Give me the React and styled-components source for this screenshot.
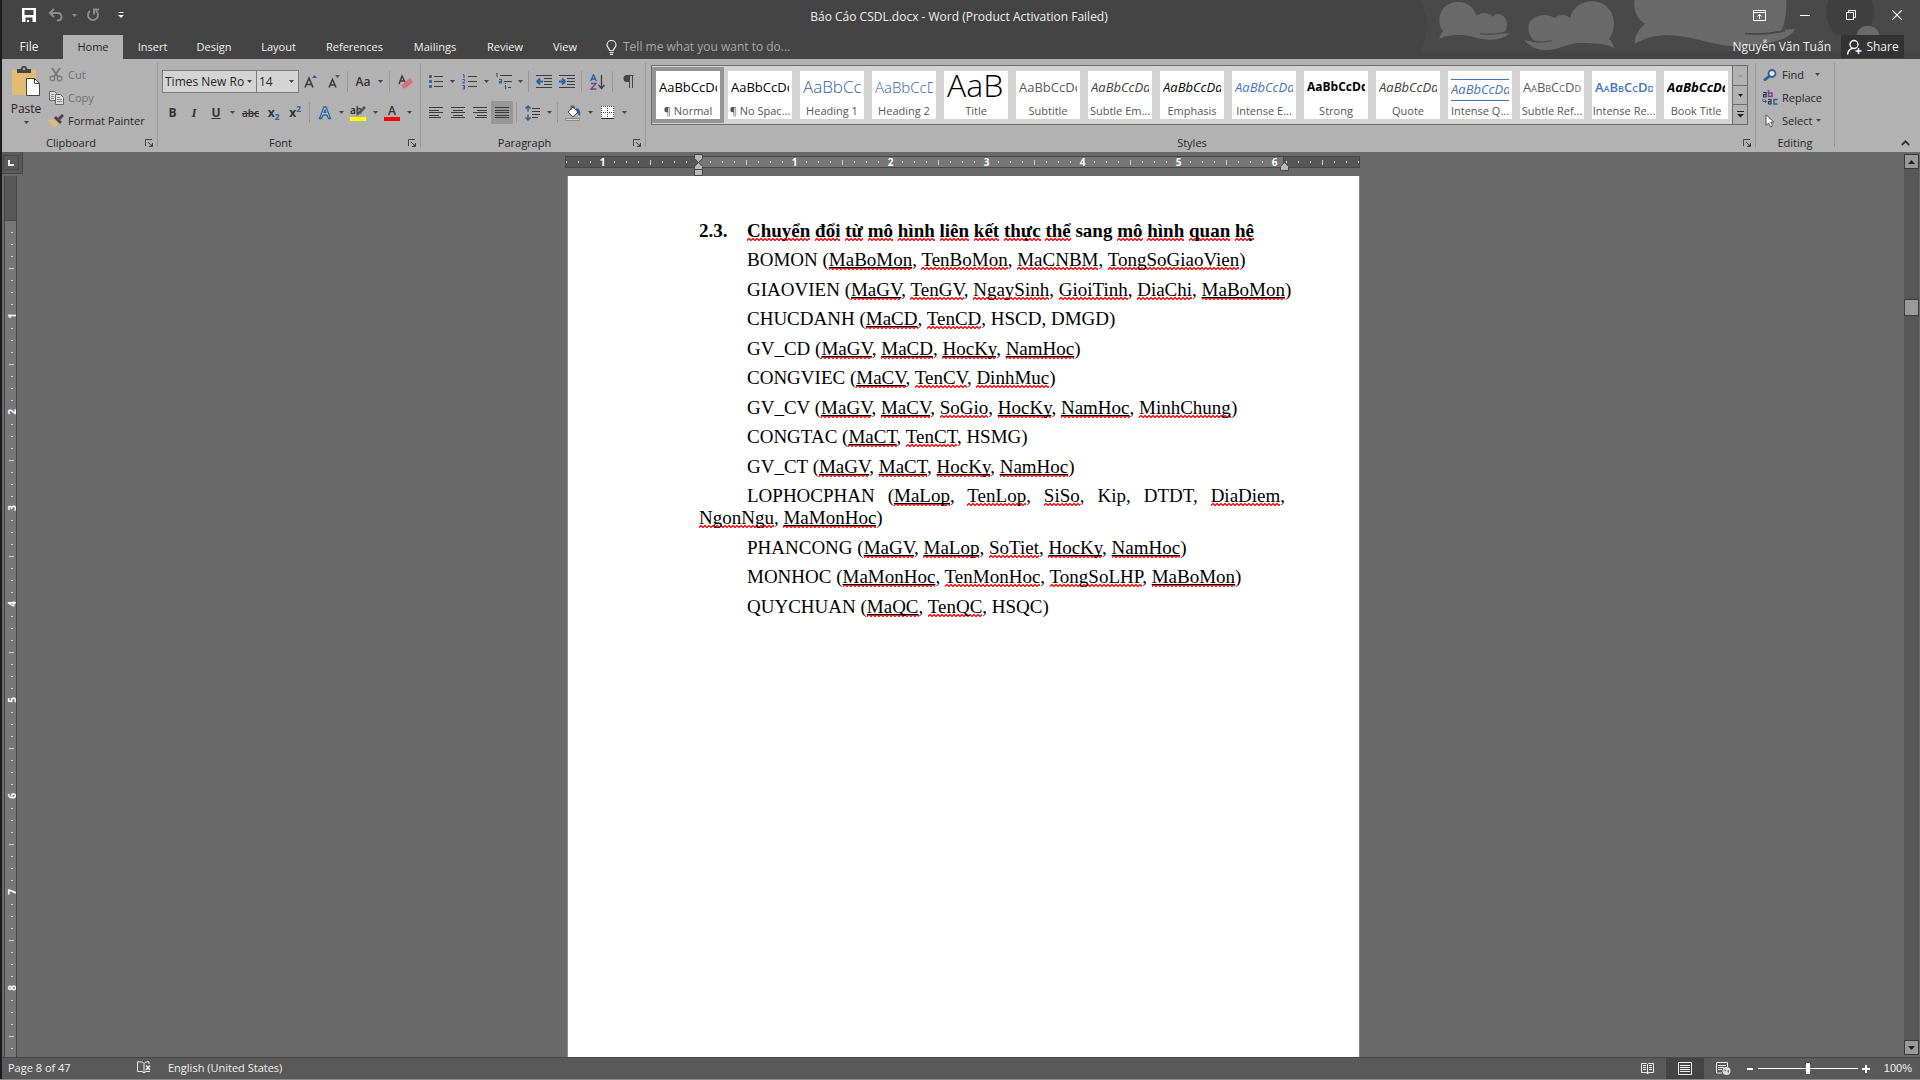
import React from "react";
import styled, { createGlobalStyle, css } from "styled-components";

const UI = `"Open Sans", "Noto Sans", sans-serif`;
const C = {
  chrome: "#444444",
  ribbon: "#b2b2b2",
  work: "#6a6a6a",
  status: "#595959",
  ink: "#262626",
  icon: "#444444",
  blue: "#2a6099",
  line: "#979797",
};

const Global = createGlobalStyle`
  * { box-sizing: border-box; }
  html, body { margin: 0; height: 100%; background: #1c1c1c; }
  #root { height: 100%; }
  button, input, select { font: inherit; color: inherit; margin: 0; padding: 0; border: 0; background: none; }
  button { cursor: pointer; }
  svg { display: block; flex: none; }
`;

const Shell = styled.div`
  display: flex;
  flex-direction: column;
  height: 100vh;
  padding-left: 2px;
  font: 12px/16px ${UI};
  color: ${C.ink};
  border-bottom: 1px solid #8a8a8a;
  overflow: hidden;
`;

/* ---------- header ---------- */
const Header = styled.header`
  position: relative;
  background: ${C.chrome};
  color: #f0f0f0;
`;
const Clouds = styled.svg`
  position: absolute;
  top: 0;
  right: 0;
`;
const TitleRow = styled.div`
  position: relative;
  display: grid;
  grid-template-columns: 1fr auto 1fr;
  align-items: center;
  height: 35px;
  padding-bottom: 5px;
`;
const Title = styled.h1`
  margin: 0;
  padding: 4px 4px 0 0;
  font-size: 12px;
  font-weight: 400;
`;
const QuickBar = styled.div`
  display: flex;
  align-items: center;
  padding-left: 12px;
`;
const WindowBar = styled.div`
  display: flex;
  justify-content: flex-end;
`;
const IconButton = styled.button`
  display: flex;
  align-items: center;
  justify-content: center;
  width: ${(p) => p.$w}px;
  height: 23px;
  background: ${(p) => (p.$on ? "#979797" : "none")};
`;
const TabRow = styled.nav`
  position: relative;
  display: flex;
  height: 24px;
`;
const Tab = styled.button`
  width: ${(p) => p.$w}px;
  margin-right: ${(p) => p.$gap || 0}px;
  font-size: ${(p) => (p.$file ? 12 : 11)}px;
  ${(p) =>
    p.$active &&
    css`
      background: ${C.ribbon};
      color: ${C.ink};
    `}
`;
const TellMe = styled.label`
  display: flex;
  align-items: center;
  gap: 6px;
  margin-left: 14px;
  flex: 1;
`;
const TellInput = styled.input`
  width: 200px;
  outline: 0;
  font-size: 12px;
  &::placeholder { color: #a8a8a8; opacity: 1; }
`;
const User = styled.button`
  padding: 0 10px;
  font-size: 12px;
`;
const Share = styled.button`
  display: flex;
  align-items: center;
  justify-content: center;
  gap: 4px;
  width: 63px;
  height: 23px;
  margin-right: 16px;
  background: #333333;
`;

/* ---------- ribbon ---------- */
const Ribbon = styled.div`
  display: flex;
  height: 93px;
  background: ${C.ribbon};
`;
const Group = styled.section`
  display: flex;
  flex-direction: column;
  flex: none;
  width: ${(p) => p.$w}px;
`;
const GroupBody = styled.div`
  flex: 1;
  display: flex;
  flex-direction: ${(p) => (p.$rows ? "column" : "row")};
  gap: ${(p) => (p.$rows ? 8 : 0)}px;
  padding: ${(p) => p.$pad};
`;
const Footer = styled.div`
  display: flex;
  height: 18px;
`;
const GroupName = styled.h2`
  flex: 1;
  margin: 0;
  font-size: 11px;
  font-weight: 400;
  line-height: 18px;
  text-align: center;
`;
const Launch = styled.button`
  display: flex;
  align-items: center;
  justify-content: center;
  width: 17px;
`;
const Divider = styled.div`
  width: 1px;
  margin: 4px 0 5px;
  background: ${C.line};
`;
const Tools = styled.div`
  display: flex;
  align-items: center;
  height: 23px;
`;
const Sep = styled.div`
  width: 1px;
  height: 21px;
  margin: 0 3px;
  background: ${C.line};
`;
const Select = styled.select`
  appearance: none;
  width: ${(p) => p.$w}px;
  height: 23px;
  margin-right: ${(p) => p.$join || 0}px;
  padding: 0 12px 0 2px;
  border: 1px solid #7c7c7c;
  border-radius: 0;
  background: #d4d4d4
    url("data:image/svg+xml,%3Csvg xmlns='http://www.w3.org/2000/svg' width='5' height='3'%3E%3Cpath d='M0 0h5L2.500 3z' fill='%23444'/%3E%3C/svg%3E")
    no-repeat right 4px center;
  font-size: 12px;
`;
const Glyph = styled.span`
  font-size: ${(p) => p.$s || 14}px;
  font-weight: ${(p) => p.$wt || 600};
  font-style: ${(p) => (p.$i ? "italic" : "normal")};
  font-family: ${(p) => (p.$serif ? `"Liberation Serif", serif` : UI)};
  text-decoration: ${(p) => p.$deco || "none"};
  line-height: 16px;
  color: #333333;
  sup, sub { font-size: 8px; color: ${C.blue}; line-height: 0; }
`;
const PasteButton = styled.button`
  display: flex;
  flex-direction: column;
  align-items: center;
  width: 40px;
  height: 63px;
  margin: 3px 2px 0 4px;
  gap: 4px;
`;
const Stack = styled.div`
  display: flex;
  flex-direction: column;
`;
const Command = styled.button`
  display: flex;
  align-items: center;
  gap: 4px;
  height: 23px;
  font-size: 11px;
  color: ${(p) => (p.disabled ? "#707070" : C.ink)};
`;
const IconSlot = styled.span`
  display: flex;
  justify-content: center;
  width: 16px;
`;
const CommandDrop = styled.span`
  padding-left: ${(p) => p.$pad || 0}px;
`;

/* ---------- gallery ---------- */
const Gallery = styled.div`
  display: flex;
  height: 60px;
  border: 1px solid #6c6c6c;
  background: #d4d4d4;
`;
const Tiles = styled.div`
  display: flex;
  flex: 1;
  overflow: hidden;
  padding: 1px 0;
`;
const Tile = styled.button`
  flex: none;
  width: 72px;
  height: 56px;
  border: 4px solid ${(p) => (p.$on ? "#949494" : "#d4d4d4")};
  background: #ffffff;
  text-align: center;
  overflow: hidden;
`;
const Sample = styled.span`
  display: block;
  height: 28px;
  margin: 4px 3px 0;
  overflow: hidden;
  white-space: nowrap;
  text-align: left;
  font-size: ${(p) => p.$s || 13}px;
  line-height: ${(p) => p.$lh || 24}px;
  font-weight: ${(p) => p.$wt || 400};
  font-style: ${(p) => (p.$i ? "italic" : "normal")};
  font-variant: ${(p) => (p.$sc ? "small-caps" : "normal")};
  color: ${(p) => p.$c || "#000"};
  ${(p) =>
    p.$ruled &&
    css`
      height: 22px;
      margin: 8px 3px 2px;
      line-height: 18px;
      border-top: 1px solid #4472c4;
      border-bottom: 1px solid #4472c4;
    `}
`;
const TileName = styled.span`
  display: block;
  font-size: 11px;
  line-height: 16px;
  white-space: nowrap;
  color: #555555;
`;
const GalleryNav = styled.div`
  display: flex;
  flex-direction: column;
  width: 15px;
  border-left: 1px solid #6c6c6c;
`;
const NavButton = styled.button`
  flex: 1;
  display: flex;
  align-items: center;
  justify-content: center;
  background: ${C.ribbon};
  & + & { border-top: 1px solid #6c6c6c; }
`;
const Collapse = styled.button`
  display: flex;
  align-items: center;
  justify-content: center;
  align-self: flex-end;
  width: 20px;
  height: 18px;
  margin: 0 5px 0 auto;
`;

/* ---------- workspace ---------- */
const Work = styled.div`
  flex: 1;
  min-height: 0;
  display: grid;
  grid-template-columns: 21px 1fr 18px;
  background: ${C.work};
`;
const LeftRail = styled.div`
  display: flex;
  flex-direction: column;
  min-height: 0;
  overflow: hidden;
`;
const Corner = styled.button`
  display: flex;
  flex: none;
  width: 21px;
  height: 22px;
  padding: 3px 3px 4px 1px;
  background: ${C.status};
  border-right: 1px solid #474747;
  border-bottom: 1px solid #474747;
`;
const CornerFace = styled.span`
  flex: 1;
  display: flex;
  align-items: center;
  justify-content: center;
  height: 15px;
  border: 1px solid #474747;
`;
const VRuler = styled.div`
  flex: 1;
  min-height: 0;
  width: 13px;
  margin: 2px 0 0 2px;
  border: solid #474747;
  border-width: 0 1px;
  background: #777777;
  overflow: hidden;
`;
const VMargin = styled.div`
  height: 45px;
  margin-bottom: 5px;
  background: #575757;
  border-bottom: 1px solid #474747;
`;
const VCell = styled.div`
  display: flex;
  align-items: center;
  justify-content: center;
  height: 12px;
  padding-left: 2px;
`;
const VMark = styled.i`
  width: ${(p) => (p.$half ? 5 : 2)}px;
  height: 1px;
  background: #cfcfcf;
`;
const RulerNum = styled.b`
  font-size: 10px;
  line-height: 10px;
  color: #ffffff;
  transform: ${(p) => (p.$turn ? "rotate(-90deg)" : "none")};
`;
const Canvas = styled.div`
  display: flex;
  flex-direction: column;
  align-items: center;
  min-height: 0;
  overflow: hidden;
`;
const Sheet = styled.div`
  display: flex;
  flex-direction: column;
  flex: 1;
  width: 795px;
`;
const HRuler = styled.div`
  position: relative;
  flex: none;
  display: flex;
  justify-content: center;
  height: 12px;
  margin: 4px 0 8px;
  border: 1px solid #474747;
  background: linear-gradient(to right, #575757 133px, #777777 133px, #777777 717px, #474747 717px, #474747 718px, #575757 718px);
`;
const HTrack = styled.div`
  display: flex;
  justify-content: center;
  width: 100%;
  overflow: hidden;
`;
const HCell = styled.div`
  flex: none;
  display: flex;
  align-items: center;
  justify-content: center;
  width: 12px;
`;
const HMark = styled.i`
  width: 1px;
  height: ${(p) => (p.$half ? 5 : 2)}px;
  background: #cfcfcf;
`;
const Marker = styled.svg`
  position: absolute;
  left: ${(p) => p.$x}px;
  top: ${(p) => p.$y}px;
`;
const Page = styled.article`
  flex: 1;
  margin-left: 2px;
  padding: 44px 74px 0 131px;
  border: solid #8a8a8a;
  border-width: 0 1px;
  background: #ffffff;
  color: #000000;
  font: 19px/22px "Liberation Serif", "Times New Roman", serif;
`;
const Heading = styled.h3`
  display: flex;
  margin: 0 0 7px;
  font-size: inherit;
  font-weight: 700;
  white-space: nowrap;
`;
const HeadNo = styled.span`
  width: 48px;
`;
const Para = styled.p`
  margin: 0 0 8px;
  text-indent: 48px;
  text-align: justify;
  white-space: ${(p) => (p.$wrap ? "normal" : "nowrap")};
  &:nth-child(odd) { margin-bottom: 7px; }
`;
const Spell = styled.span`
  background: url("data:image/svg+xml,%3Csvg xmlns='http://www.w3.org/2000/svg' width='4' height='3'%3E%3Cpath d='M-1 3.500L2 .5L5 3.500' fill='none' stroke='red' stroke-width='1.300'/%3E%3C/svg%3E")
    repeat-x left bottom;
  ${(p) =>
    p.$key &&
    css`
      text-decoration: underline;
      text-decoration-thickness: 1px;
      text-underline-offset: 1px;
      text-decoration-skip-ink: none;
    `}
`;
const ScrollBar = styled.div`
  display: flex;
  flex-direction: column;
  width: 15px;
  margin: 2px 1px 2px 2px;
  background: #575757;
`;
const ScrollButton = styled.button`
  display: flex;
  align-items: center;
  justify-content: center;
  height: 15px;
  background: #999999;
  border: 1px solid #383838;
`;
const ScrollTrack = styled.div`
  flex: 1;
  padding-top: 130px;
`;
const ScrollThumb = styled.div`
  height: 17px;
  background: #999999;
  border: 1px solid #3c3c3c;
`;

/* ---------- status bar ---------- */
const Status = styled.footer`
  display: flex;
  align-items: center;
  height: 22px;
  padding: 0 8px 0 6px;
  background: ${C.status};
  border-top: 1px solid #474747;
  color: #f0f0f0;
  font-size: 11px;
`;
const StatusButton = styled.button`
  width: ${(p) => (p.$w ? p.$w + "px" : "auto")};
  padding-bottom: 2px;
  text-align: left;
`;
const ViewButton = styled.button`
  display: flex;
  align-items: center;
  justify-content: center;
  width: 38px;
  height: 21px;
  background: ${(p) => (p.$on ? "#444444" : "none")};
`;
const Spacer = styled.div`
  flex: 1;
`;
const Zoom = styled.input`
  appearance: none;
  width: 100px;
  height: 11px;
  background: linear-gradient(#fff, #fff) center / 100% 1px no-repeat;
  &::-webkit-slider-thumb {
    appearance: none;
    width: 4px;
    height: 11px;
    background: #ffffff;
  }
`;
const ZoomStep = styled.button`
  display: flex;
  justify-content: center;
  width: 16px;
`;
const ZoomValue = styled.button`
  width: 38px;
  padding-bottom: 2px;
  font: 11px/16px "Liberation Sans", Arial, sans-serif;
  text-align: right;
`;

/* ---------- icons ---------- */
const Caret = ({ c = "#444", up }) => (
  <svg width="5" height="3" viewBox="0 0 5 3"><path d={up ? "M0 3h5L2.500 0z" : "M0 0h5L2.500 3z"} fill={c} /></svg>
);
const Svg = ({ w = 16, h = 16, children }) => (
  <svg width={w} height={h} viewBox={`0 0 ${w} ${h}`} fill="none">{children}</svg>
);
const alignRows = {
  left: [[1, 15], [1, 11], [1, 15], [1, 11], [1, 13]],
  center: [[1, 15], [3, 13], [1, 15], [3, 13], [1, 15]],
  right: [[1, 15], [5, 15], [1, 15], [5, 15], [3, 15]],
  full: [[1, 15], [1, 15], [1, 15], [1, 15], [1, 15]],
};
const Align = ({ kind }) => (
  <Svg w={16} h={13}>
    {alignRows[kind].map(([a, b], i) => <path key={i} d={`M${a} ${1.5 + i * 2.5}H${b}`} stroke="#3c3c3c" shapeRendering="crispEdges" />)}
  </Svg>
);
const LaunchIcon = () => (
  <Svg w={8} h={8}><path d="M.5 7V.5H7M3 3l4 4M7.500 4v3.500H4" stroke="#444" /><path d="M7.500 4.500v3h-3z" fill="#444" /></Svg>
);
const SaveIcon = () => (
  <Svg w={14} h={14}><path d="M0 0h14v14H0zM2.500 2v5h9V2zM3.500 9.500V14h1.500v-2h2v2h3.500V9.500z" fill="#fff" fillRule="evenodd" /></Svg>
);
const UndoIcon = () => (
  <Svg w={16} h={14}><path d="M6 1L2 5l4 4M2.500 5H9c3 0 4.500 1.500 4.500 4S12 12.500 9 12.500" stroke="#8c8c8c" strokeWidth="2" /></Svg>
);
const RedoIcon = () => (
  <Svg w={14} h={14}><path d="M4 3a5 5 0 1 0 6 0M8 6.500V1.500h5" stroke="#8c8c8c" strokeWidth="2" /></Svg>
);
const CustomIcon = () => (
  <Svg w={6} h={7}><path d="M.5.5h5" stroke="#eee" /><path d="M0 3h6L3 6z" fill="#eee" /></Svg>
);
const BulbIcon = () => (
  <Svg w={11} h={15}><path d="M3.500 10.500C3.500 8 1 7.500 1 5a4.500 4.500 0 0 1 9 0c0 2.500-2.500 3-2.500 5.500zM3.500 12.500h4M4 14.300h3" stroke="#e8e8e8" strokeWidth="1.200" /></Svg>
);
const PersonIcon = () => (
  <Svg w={16} h={16}><circle cx="8" cy="5.500" r="4" stroke="#fff" strokeWidth="1.400" /><path d="M1.500 15.500C2 12 4 10 6.500 9.500M9.500 12h6M12.500 9v6" stroke="#fff" strokeWidth="1.400" /></Svg>
);
const PasteIcon = () => (
  <Svg w={28} h={31}>
    <path d="M0 4h24v25H0z" fill="#e3bd6f" />
    <path d="M5 7V3h4a3 3 0 0 1 6 0h4v4z" fill="#444" /><circle cx="12" cy="3" r="1.200" fill="#b2b2b2" />
    <path d="M14.500 12.500h8l5 5v12h-13z" fill="#fff" stroke="#444" /><path d="M22.500 12.500v5h5" stroke="#444" />
  </Svg>
);
const CutIcon = () => (
  <Svg w={14} h={15}><path d="M3 1l6 9M11 1L5 10" stroke="#777" strokeWidth="1.800" /><circle cx="3.300" cy="11.500" r="2.300" stroke="#777" strokeWidth="1.200" /><circle cx="10.700" cy="11.500" r="2.300" stroke="#777" strokeWidth="1.200" /></Svg>
);
const CopyIcon = () => (
  <Svg w={15} h={14}>
    <path d="M.5.5h5l2 2v7h-7z" fill="#ddd" stroke="#666" /><path d="M2 3.500h3M2 5.500h3M2 7.500h3" stroke="#888" />
    <path d="M6.500 3.500h5l3 3v7h-8z" fill="#ddd" stroke="#666" /><path d="M8 6.500h3M8 8.500h5M8 10.500h5" stroke="#888" />
  </Svg>
);
const BrushIcon = () => (
  <Svg w={16} h={14}><path d="M0 6l5-1 5 5-3 4z" fill="#e3bd6f" /><path d="M6 4l2-2 6 6-2 2z" fill="#444" /><path d="M11 5l4-4" stroke="#444" strokeWidth="3" /></Svg>
);
const GrowIcon = ({ down }) => (
  <Svg w={14} h={16}>
    <path d={down ? "M2 13.500L5.500 5.500 9 13.500M3.500 11h4" : "M1 13.500L5 4l4 9.500M2.500 10.500h5"} stroke="#3c3c3c" strokeWidth="1.600" />
    <path d={down ? "M8 1h5l-2.500 3z" : "M8 4h5L10.500 1z"} fill={C.blue} />
  </Svg>
);
const EraserIcon = () => (
  <Svg w={16} h={16}><path d="M1 10L4 2l3 6M2.500 7h4" stroke="#3c3c3c" strokeWidth="1.500" /><path d="M5 10l7-6 3 4-7 6z" fill="#da6a80" /><path d="M4 11l3 3" stroke="#da6a80" strokeWidth="2" /></Svg>
);
const EffectsIcon = () => (
  <Svg w={16} h={16}><path d="M2.500 13.500L7 2h2l4.500 11.500h-2L10 10H6l-1.500 3.500zM7 7.500h2L8 5z" fill="#d0dcec" stroke={C.blue} strokeWidth="1.300" /></Svg>
);
const Swatch = styled.span`
  display: flex;
  align-items: center;
  justify-content: center;
  width: 16px;
  height: 17px;
  border-bottom: 4px solid ${(p) => p.$c};
`;
const HiliteIcon = () => (
  <Svg w={16} h={13}><path d="M6 12l2-4 6-6 2 2-6 6z" fill="#555" /></Svg>
);
const HiliteGlyph = styled.span`
  display: flex;
  width: 16px;
  font-size: 10px;
  font-weight: 600;
  line-height: 12px;
  svg { margin-left: -12px; }
`;
const BulletIcon = () => (
  <Svg w={14} h={15}>{[1, 6, 11].map((y) => <React.Fragment key={y}><rect x="0" y={y} width="3" height="3" rx="1" fill={C.blue} /><path d={`M5 ${y + 1.5}h9`} stroke="#3c3c3c" /></React.Fragment>)}</Svg>
);
const NumberIcon = () => (
  <Svg w={15} h={17}>
    <path d="M1 1.500h1V5M.5 6.500h2v1.500l-2 2h2.500M.5 12.500h2v3.500h-2M1 14.200h1.500" stroke={C.blue} />
    <path d="M6 3.500h9M6 8.500h9M6 13.500h9" stroke="#3c3c3c" />
  </Svg>
);
const MultiIcon = () => (
  <Svg w={17} h={17}>
    <path d="M1 .5h1V4M4 6.500h2.500V10H4.500V8.500h2M10.500 10v1M10.500 12v4" stroke={C.blue} strokeWidth="1.200" />
    <path d="M5 2.500h12M9 8.500h8M13 14.500h3" stroke="#3c3c3c" />
  </Svg>
);
const IndentIcon = ({ out }) => (
  <Svg w={16} h={13}>
    <path d="M0 .5h16M8 3.500h8M8 6.500h8M8 9.500h8M0 12.500h16" stroke="#3c3c3c" />
    <path d={out ? "M7 6.500H1M4 3.500L1 6.500l3 3" : "M0 6.500h6M3 3.500l3 3-3 3"} stroke={C.blue} strokeWidth="1.800" />
  </Svg>
);
const SortIcon = () => (
  <Svg w={15} h={16}>
    <path d="M.7 7L3.500.8 6.300 7M1.700 5h3.600" stroke={C.blue} strokeWidth="1.400" />
    <path d="M1 9.500h5l-5 5.500h5.300" stroke="#7a3f98" strokeWidth="1.400" />
    <path d="M11.500 1v13M8.500 11l3 3.500 3-3.500" stroke="#3c3c3c" strokeWidth="1.300" />
  </Svg>
);
const PilcrowIcon = () => (
  <Svg w={11} h={13}><path d="M10.500.5H4.500M6.500 1v12M9.500 1v12" stroke="#444" /><path d="M7 0H4a3.500 3.500 0 0 0 0 7h3z" fill="#444" /></Svg>
);
const SpacingIcon = () => (
  <Svg w={15} h={16}><path d="M3 1v5.500M.5 3.500L3 1l2.500 2.500M3 15V9.500M.5 12.500L3 15l2.500-2.500" stroke={C.blue} strokeWidth="1.500" /><path d="M7 3.500h8M7 6.500h8M7 9.500h8M7 12.500h6" stroke="#3c3c3c" /></Svg>
);
const BucketIcon = () => (
  <Svg w={16} h={16}><path d="M3 7l5-5 5 5-5 5z" fill="#fff" stroke="#444" /><path d="M6 5V1h3v3" stroke="#444" /><path d="M11 3c3 0 5 3 4 8l-3-3z" fill={C.blue} /><path d="M.5 13.500h14v2H.5z" fill="#d4d4d4" stroke="#888" /></Svg>
);
const BorderIcon = () => (
  <Svg w={13} h={13}><path d="M0 0h13v12H0z" fill="#fff" /><path d="M0 .5h13M.5 0v12M12.500 0v12M6.500 0v12M0 6.500h13" stroke="#444" strokeDasharray="1 1" /><path d="M0 12.500h13" stroke="#333" /></Svg>
);
const FindIcon = () => (
  <Svg w={14} h={12}><circle cx="9" cy="4.500" r="3.500" fill="#e8e8e8" stroke={C.blue} strokeWidth="1.800" /><path d="M6.500 7L1 11.500" stroke={C.blue} strokeWidth="2.800" /></Svg>
);
const ReplaceIcon = () => (
  <Svg w={16} h={16}>
    <path d="M1 2.500h3V7H1.500V4.500H4" stroke="#333" strokeWidth="1.200" />
    <path d="M6.500 0v6.500h3.500V3H6.500" stroke="#7a3f98" strokeWidth="1.500" />
    <path d="M1 9v2.500h3M3 9.500l1.500 2L3 13" stroke={C.blue} />
    <path d="M6 9.500h3V14H6.500v-2.500H9" stroke="#333" strokeWidth="1.200" />
    <path d="M15.500 9.500H12V14h3.500" stroke={C.blue} strokeWidth="1.500" />
  </Svg>
);
const PointerIcon = () => (
  <Svg w={10} h={14}><path d="M1 .8v10.500l2.600-2.300L5.500 13l2-1-1.800-3.800H9z" fill="#fff" stroke="#444" strokeWidth=".9" /></Svg>
);
const ProofIcon = () => (
  <Svg w={14} h={13}><path d="M7 11.500V2.500C6 1 4.500.8.5.8v9.700h4.500L7 12l2-1.500h4M7 2.500C8 1 9.500.8 12 .8V3" stroke="#eee" /><path d="M9 4.500l4 4.500M13 4.500L9 9" stroke="#eee" strokeWidth="1.500" /></Svg>
);
const ReadIcon = () => (
  <Svg w={13} h={13}><path d="M.5 1.500h5l1 1 1-1h5v9h-5l-1 1.500-1-1.500h-5zM6.500 2.500V12" stroke="#eee" /><path d="M2 3.500h3M2 5.500h3M2 7.500h3M8 3.500h3M8 5.500h3M8 7.500h3" stroke="#eee" /></Svg>
);
const PrintIcon = () => (
  <Svg w={14} h={13}><path d="M.5.5h13v12H.5zM2 3.500h10M2 5.500h10M2 7.500h10M2 9.500h10" stroke="#eee" /></Svg>
);
const WebIcon = () => (
  <Svg w={15} h={13}><path d="M6 11H.5V.5h11V5M2 3.500h8M2 5.500h6M2 7.500h4" stroke="#eee" /><circle cx="10.500" cy="9" r="4" fill="#ddd" /><path d="M8 7l2 1-1 2zM11 9l2-1v3z" fill="#666" /></Svg>
);

/* ---------- data ---------- */
const tabs = [
  ["Home", 60], ["Insert", 59], ["Design", 64], ["Layout", 65],
  ["References", 87], ["Mailings", 74], ["Review", 66], ["View", 54],
];
const styleTiles = [
  { name: "¶ Normal" },
  { name: "¶ No Spac..." },
  { name: "Heading 1", s: 17, c: "#2f5fa8", wt: 300 },
  { name: "Heading 2", s: 15, c: "#2f5fa8", wt: 300 },
  { name: "Title", s: 32, wt: 300, lh: 20 },
  { name: "Subtitle", c: "#5a5a5a" },
  { name: "Subtle Em...", c: "#404040", i: true },
  { name: "Emphasis", i: true },
  { name: "Intense E...", c: "#4472c4", i: true },
  { name: "Strong", s: 12, wt: 700 },
  { name: "Quote", c: "#404040", i: true },
  { name: "Intense Q...", c: "#4472c4", i: true, ruled: true },
  { name: "Subtle Ref...", c: "#5a5a5a", sc: true },
  { name: "Intense Re...", c: "#4472c4", sc: true, wt: 600 },
  { name: "Book Title", wt: 700, i: true },
];
/* "_" marks a key attribute, "~" a word that passes the spelling check */
const relations = [
  ["BOMON", "_MaBoMon TenBoMon MaCNBM TongSoGiaoVien"],
  ["GIAOVIEN", "_MaGV TenGV NgaySinh GioiTinh DiaChi _MaBoMon"],
  ["CHUCDANH", "_MaCD TenCD ~HSCD ~DMGD"],
  ["GV_CD", "_MaGV _MaCD _HocKy _NamHoc"],
  ["CONGVIEC", "_MaCV TenCV DinhMuc"],
  ["GV_CV", "_MaGV _MaCV SoGio _HocKy _NamHoc MinhChung"],
  ["CONGTAC", "_MaCT TenCT ~HSMG"],
  ["GV_CT", "_MaGV _MaCT _HocKy _NamHoc"],
  ["LOPHOCPHAN", "_MaLop TenLop SiSo ~Kip ~DTDT DiaDiem NgonNgu _MaMonHoc"],
  ["PHANCONG", "_MaGV _MaLop SoTiet _HocKy _NamHoc"],
  ["MONHOC", "_MaMonHoc TenMonHoc TongSoLHP _MaBoMon"],
  ["QUYCHUAN", "_MaQC TenQC ~HSQC"],
];
const headingWords = "Chuyển đổi từ mô hình liên kết thực thể ~sang mô hình quan hệ".split(" ");

const Attr = ({ word }) => {
  if (word[0] === "~") return word.slice(1);
  if (word[0] === "_") return <Spell $key>{word.slice(1)}</Spell>;
  return <Spell>{word}</Spell>;
};

const GroupFoot = ({ name, launch = true }) => (
  <Footer>
    <GroupName>{name}</GroupName>
    {launch && <Launch aria-label={name + " settings"}><LaunchIcon /></Launch>}
  </Footer>
);
const Btn = ({ w, label, on, children }) => (
  <IconButton $w={w} $on={on} aria-label={label}>{children}</IconButton>
);
const Drop = ({ w = 10, label }) => <Btn w={w} label={label + " options"}><Caret /></Btn>;

const hTicks = Array.from({ length: 67 }, (_, i) => i - 11);
const vTicks = Array.from({ length: 72 }, (_, i) => i + 1);

export default function App() {
  return (
    <Shell>
      <Global />
      <Header>
        <Clouds width="520" height="59" viewBox="0 0 1560 177">
          <path d="M60 0H1560V155H60Q100 80 60 0z" fill="#494949" />
          <path d="M1285 0h130q20 50-20 105h-90q-40-50-20-105z" fill="#404040" />
          <g fill="#6a6a6a">
            <path d="M118 62C118 28 142 6 174 6c28 0 48 17 56 41 13-12 36-11 48 3 20-20 45 2 43 26-1 11-6 20-14 24 10 2 17 0 24-4-9 15-34 23-58 23-44 0-62-17-95-14-24 1-39 1-60 12 2-10 4-16 12-23-8-9-12-19-12-32z" />
            <path d="M642 70c0-37-28-66-66-66-33 0-58 20-66 50-13-12-34-12-45 1-26-21-78-9-80 26-1 18 8 33 20 42-13 2-25 0-33-6 13 20 36 34 68 33 46-2 66-23 104-21 38 1 72 1 98 15-2-12-7-20-15-27 10-13 15-29 15-47z" />
            <path d="M704 0c-6 31 10 60 32 71-20 16-33 36-32 61 55-35 117-29 178-16 55 13 108 28 168 21 75-9 119-20 136-50-13 1-29 0-41 4 12-25 14-59 14-91z" />
            <path d="M1370 108c2-20 16-31 33-31 18 0 31 11 36 28h20l20 12h-110z" />
          </g>
          <path d="M1035 101q70 5 120-10" stroke="#464646" strokeWidth="5" fill="none" />
          <path d="M240 101q40 5 72-4M455 122q-30 8-60 1" stroke="#4c4c4c" strokeWidth="4" fill="none" />
        </Clouds>
        <TitleRow>
          <QuickBar>
            <Btn w={30} label="Save"><SaveIcon /></Btn>
            <Btn w={24} label="Undo"><UndoIcon /></Btn>
            <Btn w={12} label="Undo list"><Caret c="#8c8c8c" /></Btn>
            <Btn w={25} label="Redo"><RedoIcon /></Btn>
            <Btn w={32} label="Customize toolbar"><CustomIcon /></Btn>
          </QuickBar>
          <Title>Báo Cáo CSDL.docx - Word (Product Activation Failed)</Title>
          <WindowBar>
            <Btn w={46} label="Ribbon display"><Svg w={13} h={11}><path d="M.5.5h12v10H.5zM.5 2.500h12M6.500 9V4.500M4.500 6.500l2-2 2 2" stroke="#fff" /></Svg></Btn>
            <Btn w={46} label="Minimize"><Svg w={10} h={11}><path d="M0 5.500h10" stroke="#fff" /></Svg></Btn>
            <Btn w={46} label="Restore"><Svg w={10} h={10}><path d="M.5 2.500h7v7h-7zM2.500 2V.5h7v7H8" stroke="#fff" /></Svg></Btn>
            <Btn w={46} label="Close"><Svg w={10} h={10}><path d="M0 0l10 10M10 0L0 10" stroke="#fff" strokeWidth="1.200" /></Svg></Btn>
          </WindowBar>
        </TitleRow>
        <TabRow>
          <Tab $w={54} $gap={7} $file>File</Tab>
          {tabs.map(([t, w], i) => <Tab key={t} $w={w} $active={i === 0}>{t}</Tab>)}
          <TellMe>
            <BulbIcon />
            <TellInput aria-label="Tell me" placeholder="Tell me what you want to do..." />
          </TellMe>
          <User>Nguyễn Văn Tuấn</User>
          <Share><PersonIcon />Share</Share>
        </TabRow>
      </Header>

      <Ribbon>
        <Group $w={155}>
          <GroupBody $pad="4px 0 0">
            <PasteButton>
              <PasteIcon />
              <span>Paste</span>
              <Caret />
            </PasteButton>
            <Stack>
              <Command disabled><IconSlot><CutIcon /></IconSlot>Cut</Command>
              <Command disabled><IconSlot><CopyIcon /></IconSlot>Copy</Command>
              <Command><IconSlot><BrushIcon /></IconSlot>Format Painter</Command>
            </Stack>
          </GroupBody>
          <GroupFoot name="Clipboard" />
        </Group>
        <Divider />
        <Group $w={262}>
          <GroupBody $rows $pad="11px 0 0 4px">
            <Tools>
              <Select $w={95} $join={-1} aria-label="Font"><option>Times New Roman</option></Select>
              <Select $w={43} aria-label="Font size"><option>14</option></Select>
              <Btn w={24} label="Grow font"><GrowIcon /></Btn>
              <Btn w={21} label="Shrink font"><GrowIcon down /></Btn>
              <Sep />
              <Btn w={24} label="Change case"><Glyph $s={12} $wt={600}>Aa</Glyph></Btn>
              <Drop w={11} label="Case" />
              <Sep />
              <Btn w={26} label="Clear formatting"><EraserIcon /></Btn>
            </Tools>
            <Tools>
              <Btn w={21} label="Bold"><Glyph $s={12} $wt={700}>B</Glyph></Btn>
              <Btn w={22} label="Italic"><Glyph $s={13} $wt={700} $i $serif>I</Glyph></Btn>
              <Btn w={22} label="Underline"><Glyph $s={12} $wt={700} $deco="underline">U</Glyph></Btn>
              <Drop w={11} label="Underline" />
              <Btn w={25} label="Strikethrough"><Glyph $s={10} $deco="line-through">abc</Glyph></Btn>
              <Btn w={21} label="Subscript"><Glyph $s={12} $wt={700}>x<sub>2</sub></Glyph></Btn>
              <Btn w={22} label="Superscript"><Glyph $s={12} $wt={700}>x<sup>2</sup></Glyph></Btn>
              <Sep />
              <Btn w={23} label="Text effects"><EffectsIcon /></Btn>
              <Drop label="Effects" />
              <Btn w={24} label="Highlight"><Swatch $c="#ffff00"><HiliteGlyph>ab<HiliteIcon /></HiliteGlyph></Swatch></Btn>
              <Drop label="Highlight" />
              <Btn w={24} label="Font color"><Swatch $c="#ff0000"><Glyph $s={12}>A</Glyph></Swatch></Btn>
              <Drop label="Font color" />
            </Tools>
          </GroupBody>
          <GroupFoot name="Font" />
        </Group>
        <Divider />
        <Group $w={224}>
          <GroupBody $rows $pad="11px 0 0 4px">
            <Tools>
              <Btn w={22} label="Bullets"><BulletIcon /></Btn>
              <Drop label="Bullets" />
              <Btn w={24} label="Numbering"><NumberIcon /></Btn>
              <Drop label="Numbering" />
              <Btn w={24} label="Multilevel list"><MultiIcon /></Btn>
              <Drop w={10} label="Multilevel" />
              <Sep />
              <Btn w={24} label="Decrease indent"><IndentIcon out /></Btn>
              <Btn w={22} label="Increase indent"><IndentIcon /></Btn>
              <Sep />
              <Btn w={24} label="Sort"><SortIcon /></Btn>
              <Sep />
              <Btn w={24} label="Show marks"><PilcrowIcon /></Btn>
            </Tools>
            <Tools>
              <Btn w={22} label="Align left"><Align kind="left" /></Btn>
              <Btn w={22} label="Center"><Align kind="center" /></Btn>
              <Btn w={22} label="Align right"><Align kind="right" /></Btn>
              <Btn w={22} label="Justify" on><Align kind="full" /></Btn>
              <Sep />
              <Btn w={24} label="Line spacing"><SpacingIcon /></Btn>
              <Drop w={10} label="Spacing" />
              <Sep />
              <Btn w={24} label="Shading"><BucketIcon /></Btn>
              <Drop label="Shading" />
              <Btn w={24} label="Borders"><BorderIcon /></Btn>
              <Drop label="Borders" />
            </Tools>
          </GroupBody>
          <GroupFoot name="Paragraph" />
        </Group>
        <Divider />
        <Group $w={1109}>
          <GroupBody $rows $pad="6px 7px 0 5px">
            <Gallery>
              <Tiles>
                {styleTiles.map((t, i) => (
                  <Tile key={t.name} $on={i === 0}>
                    <Sample $s={t.s} $c={t.c} $wt={t.wt} $i={t.i} $sc={t.sc} $lh={t.lh} $ruled={t.ruled}>AaBbCcDd</Sample>
                    <TileName>{t.name}</TileName>
                  </Tile>
                ))}
              </Tiles>
              <GalleryNav>
                <NavButton aria-label="Previous styles"><Caret up c="#999" /></NavButton>
                <NavButton aria-label="Next styles"><Caret c="#222" /></NavButton>
                <NavButton aria-label="More styles"><Svg w={7} h={7}><path d="M0 .5h7" stroke="#222" /><path d="M0 3h7L3.500 6.500z" fill="#222" /></Svg></NavButton>
              </GalleryNav>
            </Gallery>
          </GroupBody>
          <GroupFoot name="Styles" />
        </Group>
        <Divider />
        <Group $w={78}>
          <GroupBody $pad="4px 0 0 6px">
            <Stack>
              <Command><IconSlot><FindIcon /></IconSlot>Find<CommandDrop $pad={7}><Caret /></CommandDrop></Command>
              <Command><IconSlot><ReplaceIcon /></IconSlot>Replace</Command>
              <Command><IconSlot><PointerIcon /></IconSlot>Select<CommandDrop><Caret /></CommandDrop></Command>
            </Stack>
          </GroupBody>
          <GroupFoot name="Editing" launch={false} />
        </Group>
        <Divider />
        <Collapse aria-label="Collapse ribbon"><Svg w={9} h={6}><path d="M.8 5L4.500 1.300 8.200 5" stroke="#333" strokeWidth="1.800" /></Svg></Collapse>
      </Ribbon>

      <Work>
        <LeftRail>
          <Corner aria-label="Tab selector"><CornerFace><Svg w={6} h={6}><path d="M1 0v5h5" stroke="#eee" strokeWidth="2" /></Svg></CornerFace></Corner>
          <VRuler>
            <VMargin />
            {vTicks.map((k) => (
              <VCell key={k}>{k % 8 ? <VMark $half={k % 4 === 0} /> : <RulerNum $turn>{k / 8}</RulerNum>}</VCell>
            ))}
          </VRuler>
        </LeftRail>
        <Canvas>
          <Sheet>
            <HRuler>
              <HTrack>
                {hTicks.map((k) => (
                  <HCell key={k}>{k === 0 ? null : k % 8 ? <HMark $half={k % 4 === 0} /> : <RulerNum>{Math.abs(k / 8)}</RulerNum>}</HCell>
                ))}
              </HTrack>
              <Marker $x={128} $y={-3} width="9" height="23" viewBox="0 0 9 23">
                <path d="M.5.5h8v4l-4 4-4-4zM.5 15.500v-3l4-4 4 4v3zM.5 15.500h8v6h-8z" fill="#b8b8b8" stroke="#474747" />
              </Marker>
              <Marker $x={714} $y={5} width="9" height="9" viewBox="0 0 9 9">
                <path d="M.5 8.500v-4l4-4 4 4v4z" fill="#b8b8b8" stroke="#474747" />
              </Marker>
            </HRuler>
            <Page>
              <Heading>
                <HeadNo>2.3.</HeadNo>
                <span>{headingWords.map((w, i) => <React.Fragment key={i}>{i > 0 && " "}<Attr word={w} /></React.Fragment>)}</span>
              </Heading>
              {relations.map(([name, attrs]) => (
                <Para key={name} $wrap={name === "LOPHOCPHAN"}>
                  {name} ({attrs.split(" ").map((a, i) => <React.Fragment key={i}>{i > 0 && ", "}<Attr word={a} /></React.Fragment>)})
                </Para>
              ))}
            </Page>
          </Sheet>
        </Canvas>
        <ScrollBar>
          <ScrollButton aria-label="Scroll up"><Svg w={7} h={4}><path d="M0 4h7L3.500 0z" fill="#222" /></Svg></ScrollButton>
          <ScrollTrack><ScrollThumb /></ScrollTrack>
          <ScrollButton aria-label="Scroll down"><Svg w={7} h={4}><path d="M0 0h7L3.500 4z" fill="#222" /></Svg></ScrollButton>
        </ScrollBar>
      </Work>

      <Status>
        <StatusButton $w={129}>Page 8 of 47</StatusButton>
        <StatusButton $w={31} aria-label="Proofing errors"><ProofIcon /></StatusButton>
        <StatusButton>English (United States)</StatusButton>
        <Spacer />
        <ViewButton aria-label="Read mode"><ReadIcon /></ViewButton>
        <ViewButton $on aria-label="Print layout"><PrintIcon /></ViewButton>
        <ViewButton aria-label="Web layout"><WebIcon /></ViewButton>
        <ZoomStep aria-label="Zoom out"><Svg w={6} h={8}><path d="M0 4h6" stroke="#fff" strokeWidth="2" /></Svg></ZoomStep>
        <Zoom type="range" aria-label="Zoom" min="0" max="200" defaultValue="100" />
        <ZoomStep aria-label="Zoom in"><Svg w={8} h={8}><path d="M0 4h8M4 0v8" stroke="#fff" strokeWidth="2" /></Svg></ZoomStep>
        <ZoomValue>100%</ZoomValue>
      </Status>
    </Shell>
  );
}
